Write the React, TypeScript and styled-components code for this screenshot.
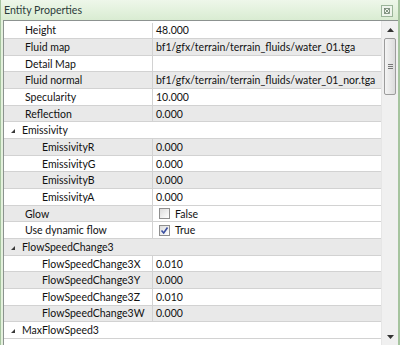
import styled, { createGlobalStyle } from 'styled-components';

const GlobalStyle = createGlobalStyle`
    html, body {
        margin: 0;
        padding: 0;
        background: #ffffff;
    }
    body {
        font-family: Lato, 'Noto Sans', sans-serif;
    }
`;

const ROW_HEIGHT = 16.67;

const Window = styled.div`
    box-sizing: border-box;
    width: 400px;
    height: 345px;
    display: flex;
    flex-direction: column;
    background: #e4f1dd;
    border-left: 1px solid #a6c49f;
    border-right: 2px solid #a6c49f;
    overflow: hidden;
`;

const TitleBar = styled.div`
    height: 20px;
    flex: none;
    display: flex;
    align-items: center;
    justify-content: space-between;
    padding: 0 3px 0 3px;
    background: linear-gradient(#eef7ea, #d9ecd2);
`;

const Title = styled.div`
    color: #2c3b3a;
    font-size: 10.6px;
    line-height: 1;
    padding-top: 1px;
`;

const CloseButton = styled.div`
    width: 10px;
    height: 10px;
    margin-top: 2px;
    margin-right: 2px;
    border: 1px solid #9bb59a;
    background: #eef5ec;
    display: flex;
    align-items: center;
    justify-content: center;
`;

const Grid = styled.div`
    flex: 1;
    display: flex;
    margin-left: 2px;
    border-top: 1px solid #8c9290;
    border-left: 1px solid #8c9290;
    background: #ffffff;
    min-height: 0;
`;

const List = styled.div`
    flex: 1;
    padding-top: 1.5px;
    min-width: 0;
`;

const Row = styled.div<{ $striped: boolean }>`
    box-sizing: border-box;
    height: ${ROW_HEIGHT}px;
    display: flex;
    background: ${({ $striped }) => ($striped ? '#e9e9e9' : '#ffffff')};
    border-bottom: 1px solid #d2d2d2;
    font-size: 10.5px;
    color: #111;
    white-space: nowrap;
`;

const NameCell = styled.div<{ $indent: number }>`
    width: 149px;
    flex: none;
    display: flex;
    align-items: center;
    padding-left: ${({ $indent }) => $indent}px;
    box-sizing: border-box;
    border-right: 1px solid #d2d2d2;
`;

const ValueCell = styled.div<{ $editor?: boolean }>`
    flex: 1;
    display: flex;
    align-items: center;
    gap: 5px;
    padding-left: 3px;
    overflow: hidden;
    background: ${({ $editor }) => ($editor ? '#ffffff' : 'transparent')};
`;

const CategoryCell = styled.div`
    flex: 1;
    display: flex;
    align-items: center;
    padding-left: 7px;
    gap: 7px;
`;

const Expander = styled.span`
    width: 0;
    height: 0;
    border-left: 4px solid transparent;
    border-bottom: 4px solid #3a3a3a;
    margin-top: 2px;
`;

const CheckBox = styled.span`
    box-sizing: border-box;
    width: 11px;
    height: 11px;
    margin-left: 3px;
    border: 1px solid #8f8f8f;
    background: linear-gradient(135deg, #dcdcdc, #ffffff);
    display: flex;
    align-items: center;
    justify-content: center;
`;

const ScrollBar = styled.div`
    width: 16px;
    flex: none;
    display: flex;
    flex-direction: column;
    align-items: center;
    background: #f0f0f0;
    border-left: 1px solid #e6e6e6;
`;

const ArrowButton = styled.div`
    height: 17px;
    width: 100%;
    display: flex;
    align-items: center;
    justify-content: center;
    flex: none;
`;

const Thumb = styled.div`
    box-sizing: border-box;
    width: 12px;
    height: 57px;
    border: 1px solid #9c9c9c;
    border-radius: 2px;
    background: linear-gradient(90deg, #f4f4f4, #dcdcdc);
    display: flex;
    flex-direction: column;
    align-items: center;
    justify-content: center;
    gap: 1px;
`;

const Grip = styled.span`
    width: 5px;
    height: 1px;
    background: #777;
`;

const Track = styled.div`
    flex: 1;
`;

type Item =
    | { kind: 'prop'; name: string; value: string; sub?: boolean }
    | { kind: 'bool'; name: string; checked: boolean }
    | { kind: 'category'; name: string };

const items: Item[] = [
    { kind: 'prop', name: 'Height', value: '48.000' },
    { kind: 'prop', name: 'Fluid map', value: 'bf1/gfx/terrain/terrain_fluids/water_01.tga' },
    { kind: 'prop', name: 'Detail Map', value: '' },
    { kind: 'prop', name: 'Fluid normal', value: 'bf1/gfx/terrain/terrain_fluids/water_01_nor.tga' },
    { kind: 'prop', name: 'Specularity', value: '10.000' },
    { kind: 'prop', name: 'Reflection', value: '0.000' },
    { kind: 'category', name: 'Emissivity' },
    { kind: 'prop', name: 'EmissivityR', value: '0.000', sub: true },
    { kind: 'prop', name: 'EmissivityG', value: '0.000', sub: true },
    { kind: 'prop', name: 'EmissivityB', value: '0.000', sub: true },
    { kind: 'prop', name: 'EmissivityA', value: '0.000', sub: true },
    { kind: 'bool', name: 'Glow', checked: false },
    { kind: 'bool', name: 'Use dynamic flow', checked: true },
    { kind: 'category', name: 'FlowSpeedChange3' },
    { kind: 'prop', name: 'FlowSpeedChange3X', value: '0.010', sub: true },
    { kind: 'prop', name: 'FlowSpeedChange3Y', value: '0.000', sub: true },
    { kind: 'prop', name: 'FlowSpeedChange3Z', value: '0.010', sub: true },
    { kind: 'prop', name: 'FlowSpeedChange3W', value: '0.000', sub: true },
    { kind: 'category', name: 'MaxFlowSpeed3' },
];

const Check = () => (
    <svg width="9" height="9" viewBox="0 0 9 9">
        <path d="M1.5 4.5 L3.7 7 L7.5 1.5" fill="none" stroke="#3a4fa0" strokeWidth="1.6" />
    </svg>
);

const App = () => {
    return (
        <>
            <GlobalStyle />
            <Window>
                <TitleBar>
                    <Title>Entity Properties</Title>
                    <CloseButton>
                        <svg width="6" height="6" viewBox="0 0 6 6">
                            <rect x="0.5" y="0.5" width="5" height="5" fill="none" stroke="#6b7f6b" strokeWidth="0.8" />
                            <path d="M1 1 L5 5 M5 1 L1 5" stroke="#6b7f6b" strokeWidth="0.8" />
                        </svg>
                    </CloseButton>
                </TitleBar>
                <Grid>
                    <List>
                        {items.map((item, index) => {
                            const striped = index % 2 === 1;
                            if (item.kind === 'category') {
                                return (
                                    <Row key={item.name} $striped={striped}>
                                        <CategoryCell>
                                            <Expander />
                                            {item.name}
                                        </CategoryCell>
                                    </Row>
                                );
                            }
                            if (item.kind === 'bool') {
                                return (
                                    <Row key={item.name} $striped={striped}>
                                        <NameCell $indent={21}>{item.name}</NameCell>
                                        <ValueCell $editor>
                                            <CheckBox>{item.checked && <Check />}</CheckBox>
                                            {item.checked ? 'True' : 'False'}
                                        </ValueCell>
                                    </Row>
                                );
                            }
                            return (
                                <Row key={item.name} $striped={striped}>
                                    <NameCell $indent={item.sub ? 38 : 21}>{item.name}</NameCell>
                                    <ValueCell>{item.value}</ValueCell>
                                </Row>
                            );
                        })}
                    </List>
                    <ScrollBar>
                        <ArrowButton>
                            <svg width="7" height="4" viewBox="0 0 7 4">
                                <path d="M0 4 L3.5 0 L7 4 Z" fill="#333" />
                            </svg>
                        </ArrowButton>
                        <Thumb>
                            <Grip />
                            <Grip />
                            <Grip />
                        </Thumb>
                        <Track />
                        <ArrowButton>
                            <svg width="7" height="4" viewBox="0 0 7 4">
                                <path d="M0 0 L7 0 L3.5 4 Z" fill="#333" />
                            </svg>
                        </ArrowButton>
                    </ScrollBar>
                </Grid>
            </Window>
        </>
    );
};

export default App;
